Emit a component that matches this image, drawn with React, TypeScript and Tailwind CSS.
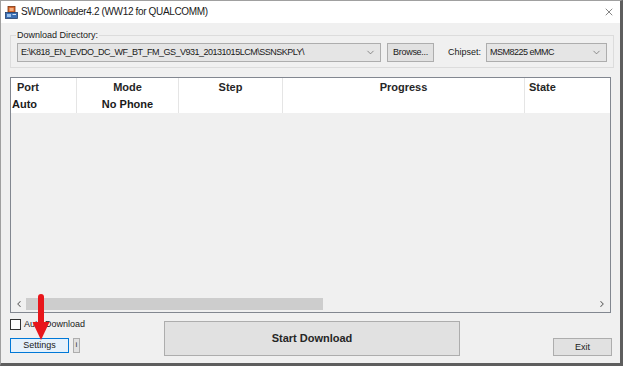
import { ChevronDown, ChevronLeft, ChevronRight, X } from "lucide-react";

/** Small stand-in for the app's title bar icon (a boxed computer glyph). */
function AppIcon() {
  return (
    <svg width="13" height="13" viewBox="0 0 13 13" className="flex-none">
      <rect x="3" y="0.5" width="7" height="6" fill="#d9662b" stroke="#7a3512" strokeWidth="0.8" />
      <rect x="4.5" y="2" width="4" height="3" fill="#f4b183" />
      <rect x="0.5" y="6.5" width="12" height="6" fill="#3c6fb4" stroke="#23406b" strokeWidth="0.8" />
      <rect x="2" y="8" width="4" height="3" fill="#9cc3ee" />
      <rect x="7.5" y="8" width="3.5" height="1" fill="#d7e6f7" />
    </svg>
  );
}

function ComboBox(props: { value: string; className?: string }) {
  return (
    <div
      className={`flex h-[19px] items-center border border-[#adadad] bg-[#e5e5e5] pl-[3px] pr-[4px] ${props.className ?? ""}`}
    >
      <span className="min-w-0 flex-1 truncate text-[9px] leading-none tracking-[-0.5px] text-[#1a1a1a]">
        {props.value}
      </span>
      <ChevronDown size={11} strokeWidth={1.5} className="flex-none text-[#606060]" />
    </div>
  );
}

const columns = [
  { label: "Port", width: "w-[66px]", align: "justify-start pl-[6px]" },
  { label: "Mode", width: "w-[102px]", align: "justify-center" },
  { label: "Step", width: "w-[104px]", align: "justify-center" },
  { label: "Progress", width: "w-[242px]", align: "justify-center" },
  { label: "State", width: "flex-1", align: "justify-start pl-[4px]" }
];

const rowCells = [
  { text: "Auto", width: "w-[66px]", align: "justify-start pl-[1px]" },
  { text: "No Phone", width: "w-[102px]", align: "justify-center" },
  { text: "", width: "w-[104px]", align: "justify-center" },
  { text: "", width: "w-[242px]", align: "justify-center" },
  { text: "", width: "flex-1", align: "justify-start" }
];

function PortTable() {
  return (
    <div className="mx-[9px] mt-[9px] flex h-[236px] flex-col border border-[#828790] bg-[#f0f0f0]">
      <div className="flex h-[18px] bg-white">
        {columns.map((col) => (
          <div
            key={col.label}
            className={`flex items-center border-r border-[#e5e5e5] text-[11px] font-bold text-[#262626] last:border-r-0 ${col.width} ${col.align}`}
          >
            {col.label}
          </div>
        ))}
      </div>
      <div className="flex h-[17px] bg-white">
        {rowCells.map((cell, i) => (
          <div
            key={i}
            className={`flex items-center border-r border-[#e5e5e5] text-[11px] font-bold text-[#1a1a1a] last:border-r-0 ${cell.width} ${cell.align}`}
          >
            {cell.text}
          </div>
        ))}
      </div>
      <div className="flex-1" />
      <div className="flex h-[16px] items-center bg-[#f0f0f0]">
        <ChevronLeft size={10} strokeWidth={2.5} className="ml-[3px] flex-none text-[#606060]" />
        <div className="ml-[2px] h-[12px] w-[297px] bg-[#cdcdcd]" />
        <div className="flex-1" />
        <ChevronRight size={10} strokeWidth={2.5} className="mr-[3px] flex-none text-[#606060]" />
      </div>
    </div>
  );
}

/** Red annotation arrow pointing at the Settings button. */
function RedArrow() {
  return (
    <svg width="20" height="48" viewBox="0 0 20 48" className="pointer-events-none absolute left-[31px] top-[294px]">
      <line x1="10" y1="3" x2="10" y2="32" stroke="#e8161b" strokeWidth="6" strokeLinecap="round" />
      <polygon points="1.5,28 18.5,28 10,46" fill="#e8161b" />
    </svg>
  );
}

export default function App() {
  return (
    <div className="relative h-[369px] w-[626px] overflow-hidden bg-white font-['Liberation_Sans',Arial,sans-serif]">
      <div className="flex h-[366px] w-[623px] flex-col border-l border-t border-[#a0a0a0] border-b-[3px] border-r-[3px] border-b-[#5e5e5e] border-r-[#5e5e5e] bg-[#f0f0f0]">
        {/* title bar */}
        <div className="flex h-[22px] flex-none items-center gap-[3px] bg-white pl-[4px] pr-[5px]">
          <AppIcon />
          <span className="text-[10px] leading-none tracking-[-0.35px] text-[#1a1a1a]">
            SWDownloader4.2 (WW12 for QUALCOMM)
          </span>
          <div className="flex-1" />
          <X size={12} strokeWidth={1.2} className="text-[#333]" />
        </div>

        {/* download directory group */}
        <fieldset className="mx-[9px] mt-[7px] h-[38px] border border-[#dcdcdc] px-[6px]">
          <legend className="ml-[-1px] px-[1px] text-[9px] leading-[11px] text-[#1a1a1a]">Download Directory:</legend>
          <div className="mt-[2px] flex items-center">
            <ComboBox value="E:\K818_EN_EVDO_DC_WF_BT_FM_GS_V931_20131015LCM\SSNSKPLY\" className="w-[364px]" />
            <button
              type="button"
              className="ml-[6px] h-[19px] w-[47px] border border-[#adadad] bg-[#e1e1e1] text-[9px] leading-none tracking-[-0.3px] text-[#1a1a1a]"
            >
              Browse...
            </button>
            <span className="ml-[14px] text-[9px] leading-none text-[#1a1a1a]">Chipset:</span>
            <ComboBox value="MSM8225 eMMC" className="ml-[5px] w-[121px]" />
          </div>
        </fieldset>

        <PortTable />

        {/* bottom controls */}
        <div className="flex flex-1 items-start pl-[9px] pr-[8px]">
          <div className="flex w-[154px] flex-none flex-col pt-[5px]">
            <label className="flex items-center gap-[3px] text-[9px] text-[#1a1a1a]">
              <span className="h-[11px] w-[11px] border border-[#333] bg-white" />
              Auto Download
            </label>
            <div className="mt-[6px] flex items-center gap-[4px]">
              <button
                type="button"
                className="h-[15px] w-[59px] border border-[#0078d7] bg-[#e5f1fb] text-[9px] leading-none text-[#1a1a1a]"
              >
                Settings
              </button>
              <span className="flex h-[15px] w-[7px] items-center justify-center border border-[#adadad] bg-[#e1e1e1] text-[8px] leading-none text-[#333]">
                i
              </span>
            </div>
          </div>
          <button
            type="button"
            className="mt-[8px] h-[35px] w-[296px] border border-[#adadad] bg-[#e1e1e1] text-[11px] font-bold text-[#262626]"
          >
            Start Download
          </button>
          <div className="flex-1" />
          <button
            type="button"
            className="mt-[25px] h-[18px] w-[59px] border border-[#adadad] bg-[#e1e1e1] text-[9px] leading-none text-[#1a1a1a]"
          >
            Exit
          </button>
        </div>
      </div>
      <RedArrow />
    </div>
  );
}
